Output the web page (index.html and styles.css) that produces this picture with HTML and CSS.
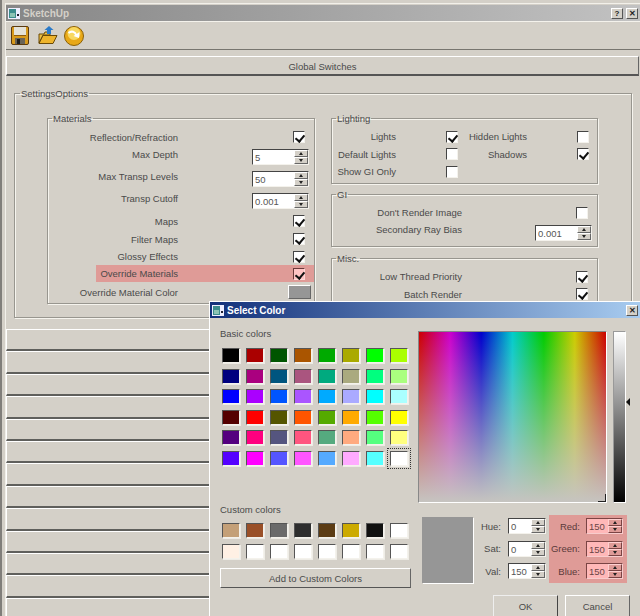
FILE: index.html
```html
<!DOCTYPE html>
<html lang="en">
<head>
    <meta charset="UTF-8">
    <title>SketchUp</title>
    <link rel="stylesheet" href="styles.css">
</head>
<body>
<div class="desktop">

    <div class="window main-window">
        <div class="titlebar titlebar-idle">
            <svg class="app-icon" width="12" height="11" viewBox="0 0 12 11"><rect width="12" height="11" fill="#eef"/><rect x="1" y="1" width="7" height="9" fill="#3c8c8c"/><rect x="2" y="5" width="5" height="4" fill="#8cc4b4"/><rect x="9" y="6" width="2" height="2" fill="#223"/></svg>
            <span class="title-text">SketchUp</span>
            <span class="title-btn help-btn">?</span>
            <span class="title-btn">✕</span>
        </div>

        <div class="toolbar">
            <svg class="tool-icon tool-save" width="18" height="19" viewBox="0 0 18 19">
                <rect x="0.5" y="0.5" width="17" height="18" rx="1.5" fill="#d89a1c" stroke="#5a3a10"/>
                <rect x="3" y="1" width="12" height="8" fill="#e4e2d8"/>
                <rect x="3" y="9" width="12" height="1" fill="#8a5a10"/>
                <rect x="4" y="12" width="10" height="6" fill="#6a6458"/>
                <rect x="6" y="13" width="3" height="5" fill="#1e1e1e"/>
            </svg>
            <svg class="tool-icon tool-open" width="20" height="19" viewBox="0 0 20 19">
                <path d="M1 8h5l1-2h5v3H5L1 17z" fill="#f0c040" stroke="#6a4a08"/>
                <path d="M1 17.500l4-8h14l-4 8z" fill="#eeb42c" stroke="#6a4a08"/>
                <path d="M9 8V4H6.500L11 0l4.500 4H13v4z" fill="#2a7ac8"/>
            </svg>
            <svg class="tool-icon tool-render" width="20" height="20" viewBox="0 0 20 20">
                <circle cx="10" cy="10" r="9.500" fill="#e8a818" stroke="#8a6008"/>
                <circle cx="10" cy="7.500" r="6.500" fill="#f8d860"/>
                <path d="M4.500 7c3-2.500 6.500-1.500 8 2.500" fill="none" stroke="#fff" stroke-width="2"/>
                <path d="M9.500 10l5.500 2 .5-6z" fill="#fff"/>
            </svg>
        </div>

        <div class="main-body">
            <div class="raised-btn wide-btn">Global Switches</div>

            <fieldset class="group settings">
                <legend>SettingsOptions</legend>
                <div class="columns">
                    <fieldset class="group materials">
                        <legend>Materials</legend>
                        <div class="row h18"><span class="lbl">Reflection/Refraction</span><span class="check on"></span></div>
                        <div class="row h22"><span class="lbl lbl-up">Max Depth</span><span class="spin spin-wide"><span class="spin-val">5</span><span class="spin-arrows"><i></i><i></i></span></span></div>
                        <div class="row h22"><span class="lbl lbl-up">Max Transp Levels</span><span class="spin spin-wide"><span class="spin-val">50</span><span class="spin-arrows"><i></i><i></i></span></span></div>
                        <div class="row h22"><span class="lbl lbl-up">Transp Cutoff</span><span class="spin spin-wide"><span class="spin-val">0.001</span><span class="spin-arrows"><i></i><i></i></span></span></div>
                        <div class="row h18"><span class="lbl">Maps</span><span class="check on"></span></div>
                        <div class="row h18"><span class="lbl">Filter Maps</span><span class="check on"></span></div>
                        <div class="row h17"><span class="lbl">Glossy Effects</span><span class="check on"></span></div>
                        <div class="row h17 row-hl"><span class="lbl">Override Materials</span><span class="check on"></span></div>
                        <div class="row h18 row-color"><span class="lbl">Override Material Color</span><span class="color-btn"></span></div>
                    </fieldset>

                    <div class="right-col">
                        <fieldset class="group">
                            <legend>Lighting</legend>
                            <div class="light-grid">
                                <span class="lbl">Lights</span><span class="check on"></span><span class="lbl">Hidden Lights</span><span class="check"></span>
                                <span class="lbl">Default Lights</span><span class="check"></span><span class="lbl">Shadows</span><span class="check on"></span>
                                <span class="lbl">Show GI Only</span><span class="check"></span>
                            </div>
                        </fieldset>
                        <fieldset class="group">
                            <legend>GI</legend>
                            <div class="row-wide h18"><span class="lbl">Don't Render Image</span><span class="check"></span></div>
                            <div class="row-wide h22"><span class="lbl lbl-up">Secondary Ray Bias</span><span class="spin spin-wide spin-gi"><span class="spin-val">0.001</span><span class="spin-arrows"><i></i><i></i></span></span></div>
                        </fieldset>
                        <fieldset class="group misc">
                            <legend>Misc.</legend>
                            <div class="row-wide h18"><span class="lbl">Low Thread Priority</span><span class="check on"></span></div>
                            <div class="row-wide h17"><span class="lbl">Batch Render</span><span class="check on"></span></div>
                        </fieldset>
                    </div>
                </div>
            </fieldset>

            <div class="stack">
                <div class="raised-btn"></div><div class="raised-btn"></div><div class="raised-btn"></div>
                <div class="raised-btn"></div><div class="raised-btn"></div><div class="raised-btn"></div>
                <div class="raised-btn"></div><div class="raised-btn"></div><div class="raised-btn"></div>
                <div class="raised-btn"></div><div class="raised-btn"></div><div class="raised-btn"></div>
                <div class="raised-btn"></div>
            </div>
        </div>
    </div>

    <div class="window color-dialog">
        <div class="titlebar titlebar-active">
            <svg class="app-icon" width="12" height="11" viewBox="0 0 12 11"><rect width="12" height="11" fill="#eef"/><rect x="1" y="1" width="7" height="9" fill="#3c8c8c"/><rect x="2" y="5" width="5" height="4" fill="#8cc4b4"/><rect x="9" y="6" width="2" height="2" fill="#223"/></svg>
            <span class="title-text">Select Color</span>
            <span class="title-btn">✕</span>
        </div>
        <div class="dialog-body">
            <div class="dialog-left">
                <div class="section-label">Basic colors</div>
                <div class="swatches basic">
                    <span class="swatch" style="background:#000000"></span><span class="swatch" style="background:#aa0000"></span><span class="swatch" style="background:#005500"></span><span class="swatch" style="background:#aa5500"></span><span class="swatch" style="background:#00aa00"></span><span class="swatch" style="background:#aaaa00"></span><span class="swatch" style="background:#00ff00"></span><span class="swatch" style="background:#aaff00"></span>
                    <span class="swatch" style="background:#00007f"></span><span class="swatch" style="background:#aa007f"></span><span class="swatch" style="background:#00557f"></span><span class="swatch" style="background:#aa557f"></span><span class="swatch" style="background:#00aa7f"></span><span class="swatch" style="background:#aaaa7f"></span><span class="swatch" style="background:#00ff7f"></span><span class="swatch" style="background:#aaff7f"></span>
                    <span class="swatch" style="background:#0000ff"></span><span class="swatch" style="background:#aa00ff"></span><span class="swatch" style="background:#0055ff"></span><span class="swatch" style="background:#aa55ff"></span><span class="swatch" style="background:#00aaff"></span><span class="swatch" style="background:#aaaaff"></span><span class="swatch" style="background:#00ffff"></span><span class="swatch" style="background:#aaffff"></span>
                    <span class="swatch" style="background:#550000"></span><span class="swatch" style="background:#ff0000"></span><span class="swatch" style="background:#555500"></span><span class="swatch" style="background:#ff5500"></span><span class="swatch" style="background:#55aa00"></span><span class="swatch" style="background:#ffaa00"></span><span class="swatch" style="background:#55ff00"></span><span class="swatch" style="background:#ffff00"></span>
                    <span class="swatch" style="background:#55007f"></span><span class="swatch" style="background:#ff007f"></span><span class="swatch" style="background:#55557f"></span><span class="swatch" style="background:#ff557f"></span><span class="swatch" style="background:#55aa7f"></span><span class="swatch" style="background:#ffaa7f"></span><span class="swatch" style="background:#55ff7f"></span><span class="swatch" style="background:#ffff7f"></span>
                    <span class="swatch" style="background:#5500ff"></span><span class="swatch" style="background:#ff00ff"></span><span class="swatch" style="background:#5555ff"></span><span class="swatch" style="background:#ff55ff"></span><span class="swatch" style="background:#55aaff"></span><span class="swatch" style="background:#ffaaff"></span><span class="swatch" style="background:#55ffff"></span><span class="swatch swatch-focus" style="background:#ffffff"></span>
                </div>
                <div class="section-label custom-label">Custom colors</div>
                <div class="swatches custom">
                    <span class="swatch" style="background:#c4a078"></span><span class="swatch" style="background:#9a5028"></span><span class="swatch" style="background:#6a6a6a"></span><span class="swatch" style="background:#2e2e2e"></span><span class="swatch" style="background:#5c3c14"></span><span class="swatch" style="background:#ccaa00"></span><span class="swatch" style="background:#101010"></span><span class="swatch" style="background:#ffffff"></span>
                    <span class="swatch" style="background:#fff0e4"></span><span class="swatch" style="background:#ffffff"></span><span class="swatch" style="background:#ffffff"></span><span class="swatch" style="background:#ffffff"></span><span class="swatch" style="background:#ffffff"></span><span class="swatch" style="background:#ffffff"></span><span class="swatch" style="background:#ffffff"></span><span class="swatch" style="background:#ffffff"></span>
                </div>
                <div class="raised-btn add-btn">Add to Custom Colors</div>
            </div>

            <div class="dialog-right">
                <div class="picker-row">
                    <div class="picker"><span class="crosshair"></span></div>
                    <div class="value-bar"><span class="value-arrow"></span></div>
                </div>
                <div class="values-row">
                    <div class="preview"></div>
                    <div class="value-grid hsv">
                        <span class="lbl">Hue:</span><span class="spin"><span class="spin-val">0</span><span class="spin-arrows"><i></i><i></i></span></span>
                        <span class="lbl">Sat:</span><span class="spin"><span class="spin-val">0</span><span class="spin-arrows"><i></i><i></i></span></span>
                        <span class="lbl">Val:</span><span class="spin"><span class="spin-val">150</span><span class="spin-arrows"><i></i><i></i></span></span>
                    </div>
                    <div class="value-grid rgb">
                        <span class="lbl">Red:</span><span class="spin"><span class="spin-val">150</span><span class="spin-arrows"><i></i><i></i></span></span>
                        <span class="lbl">Green:</span><span class="spin"><span class="spin-val">150</span><span class="spin-arrows"><i></i><i></i></span></span>
                        <span class="lbl">Blue:</span><span class="spin"><span class="spin-val">150</span><span class="spin-arrows"><i></i><i></i></span></span>
                    </div>
                </div>
                <div class="dialog-buttons">
                    <div class="raised-btn ok-btn">OK</div>
                    <div class="raised-btn">Cancel</div>
                </div>
            </div>
        </div>
    </div>

</div>
</body>
</html>
```
FILE: styles.css
```css
* {
    box-sizing: border-box;
}
body {
    margin: 0;
    font-family: "Liberation Sans", Arial, sans-serif;
    font-size: 9.500px;
    color: #4a4a4a;
}
.desktop {
    position: relative;
    width: 640px;
    height: 616px;
    overflow: hidden;
    background: linear-gradient(to right, #807e7a 2px, #d4d0c8 2px);
}

/* windows */
.window {
    position: absolute;
    background: #d4d0c8;
    border-top: 1px solid #f2f0ea;
    border-left: 1px solid #f2f0ea;
}
.main-window {
    left: 5px;
    top: 3px;
    width: 635px;
    height: 613px;
    padding-top: 1px;
}
.color-dialog {
    left: 209px;
    top: 301px;
    width: 431px;
    height: 315px;
    border-color: #fff;
}
.titlebar {
    display: flex;
    align-items: center;
    height: 16px;
    padding-left: 2px;
}
.titlebar-idle {
    background: linear-gradient(to right, #868686, #c2c2c2);
    color: #d4d0c8;
}
.titlebar-active {
    background: linear-gradient(to right, #12307a, #a8ccf0);
    color: #fff;
}
.app-icon {
    margin-right: 3px;
}
.title-text {
    flex: 1;
    font-weight: bold;
    font-size: 10px;
}
.title-btn {
    display: flex;
    align-items: center;
    justify-content: center;
    width: 12px;
    height: 11px;
    margin-right: 2px;
    background: #d4d0c8;
    border: 1px solid;
    border-color: #fff #555 #555 #fff;
    color: #222;
    font-size: 8px;
    font-weight: bold;
}
.help-btn {
    margin-right: 3px;
}

/* toolbar */
.toolbar {
    display: flex;
    align-items: center;
    height: 29px;
    padding-left: 5px;
    border-top: 1px solid #f4f2ec;
    border-bottom: 1px solid #77756f;
}
.tool-save {
    margin-right: 9px;
}
.tool-open {
    margin-right: 6px;
}

/* main body */
.main-body {
    padding: 6px 1px 0 0;
}
.raised-btn {
    display: flex;
    align-items: center;
    justify-content: center;
    height: 20px;
    background: #d4d0c8;
    border: 1px solid;
    border-color: #fff #666 #555 #fff;
}
.wide-btn {
    padding-top: 1px;
    border-bottom-width: 2px;
}
.group {
    margin: 0;
    padding: 3px 0 2px;
    min-width: 0;
    border: 1px solid #98968f;
    box-shadow: 1px 1px 0 #f6f4ee, inset 1px 1px 0 #f6f4ee;
}
.group legend {
    margin-left: 4px;
    padding: 0 1px;
    line-height: 13px;
    height: 13px;
}
.settings {
    margin: 11px 7px 0 8px;
    padding: 12px 33px 0 32px;
    height: 231px;
}
.settings > legend {
    margin-left: -27px;
}
.columns {
    display: flex;
    gap: 16px;
}
.materials {
    width: 268px;
    height: 192px;
}
.right-col {
    flex: 1;
    display: flex;
    flex-direction: column;
    gap: 4px;
}
.misc {
    flex: 1;
    margin-top: 1px;
}

/* rows */
.row, .row-wide {
    display: flex;
    align-items: center;
}
.h17 { height: 17px; }
.h18 { height: 18px; }
.h22 { height: 22px; }
.lbl {
    flex: none;
    text-align: right;
    white-space: nowrap;
}
.lbl-up {
    padding-bottom: 6px;
}
.row .lbl {
    width: 130px;
}
.row .check, .row .spin, .row .color-btn {
    margin-left: auto;
}
.row .check {
    margin-right: 9px;
}
.row .spin {
    margin-right: 5px;
}
.row-hl {
    margin-left: 48px;
    background: #df9b97;
}
.row-hl .lbl {
    width: 82px;
}
.row-hl .check {
    background-color: #ffc4c4;
    border-color: #6a3a3a #ffd8d8 #ffd8d8 #6a3a3a;
}
.row-color {
    margin-top: 1px;
}
.color-btn {
    width: 23px;
    height: 14px;
    margin-right: 3px;
    background: #969696;
    border: 1px solid;
    border-color: #fff #666 #666 #fff;
}
.row-wide .lbl {
    width: 130px;
}
.row-wide .check {
    margin-left: auto;
    margin-right: 9px;
}
.row-wide .spin-gi {
    margin-left: auto;
    margin-right: 5px;
}
.light-grid {
    display: grid;
    grid-template-columns: 64px 62px 69px 62px;
    grid-auto-rows: 17.500px;
    align-items: center;
}
.light-grid .check {
    justify-self: end;
}

/* checkbox */
.check {
    position: relative;
    flex: none;
    display: block;
    width: 12px;
    height: 12px;
    background: #fff;
    border: 1px solid;
    border-color: #444 #f4f2ec #f4f2ec #444;
}
.check.on::after {
    content: "";
    position: absolute;
    left: 3px;
    top: 1px;
    width: 4px;
    height: 7px;
    border: solid #111;
    border-width: 0 2px 2px 0;
    transform: rotate(40deg);
}

/* spin box */
.spin {
    flex: none;
    display: flex;
    width: 38px;
    height: 16px;
    background: #fff;
    border: 1px solid;
    border-color: #444 #f4f2ec #f4f2ec #444;
    color: #555;
}
.spin-wide {
    width: 57px;
}
.spin-val {
    flex: 1;
    padding-left: 2px;
    line-height: 15px;
    text-align: left;
}
.spin-arrows {
    display: flex;
    flex-direction: column;
    width: 14px;
    background: #d4d0c8;
}
.spin-arrows i {
    flex: 1;
    position: relative;
    border: 1px solid;
    border-color: #fff #666 #666 #fff;
}
.spin-arrows i::after {
    content: "";
    position: absolute;
    left: 4px;
    top: 1px;
    border: 2px solid transparent;
    border-top: 0;
    border-bottom: 3px solid #222;
}
.spin-arrows i + i::after {
    border-bottom: 0;
    border-top: 3px solid #222;
}

/* color dialog */
.dialog-body {
    display: flex;
    padding: 9px 0 0 10px;
}
.dialog-left {
    width: 198px;
}
.section-label {
    height: 13px;
    line-height: 13px;
}
.swatches {
    display: grid;
    grid-template-columns: repeat(8, 18px);
    column-gap: 6px;
    margin-left: 2px;
}
.basic {
    row-gap: 5.600px;
    margin-top: 8px;
}
.custom {
    row-gap: 6px;
    margin-top: 7px;
}
.custom-label {
    margin-top: 37px;
}
.swatch {
    position: relative;
    display: block;
    height: 15px;
    border: 1px solid;
    border-color: #555 #f4f2ec #f4f2ec #555;
    box-shadow: 1px 1px 0 #eeece6;
}
.swatch-focus {
    outline: 1px dotted #333;
    outline-offset: 2px;
}
.add-btn {
    width: 191px;
    margin-top: 9px;
    padding-top: 1px;
}
.dialog-right {
    width: 212px;
    padding-top: 4px;
}
.picker-row {
    display: flex;
    gap: 6px;
    height: 172px;
}
.picker {
    position: relative;
    width: 189px;
    border: 1px solid;
    border-color: #888 #fff #fff #888;
    background:
        linear-gradient(to bottom, rgba(198, 196, 192, 0), #c6c4c0),
        linear-gradient(to right, #cc0000, #cc00cc 16.7%, #0000cc 33.3%, #00cccc 50%, #00cc00 66.7%, #cccc00 83.3%, #cc0000);
}
.crosshair {
    position: absolute;
    right: 0;
    bottom: 0;
    width: 8px;
    height: 8px;
    border: solid #222;
    border-width: 0 1px 1px 0;
}
.value-bar {
    position: relative;
    width: 13px;
    border: 1px solid;
    border-color: #999 #fff #fff #999;
    background: linear-gradient(to bottom, #fff, #000);
}
.value-arrow {
    position: absolute;
    left: 12px;
    top: 66px;
    border: 4px solid transparent;
    border-left: 0;
    border-right: 4px solid #111;
}
.values-row {
    display: flex;
    align-items: flex-start;
    height: 68px;
    margin-top: 12px;
    padding-left: 4px;
}
.preview {
    width: 51px;
    height: 66px;
    margin-top: 2px;
    background: #969696;
    box-shadow: 1px 1px 0 #fff;
}
.value-grid {
    display: grid;
    grid-auto-rows: 22.600px;
    align-items: center;
    column-gap: 7px;
    height: 68px;
}
.hsv {
    grid-template-columns: 28px 38px;
}
.rgb {
    grid-template-columns: 31px 37px;
    margin-left: 3px;
    padding-right: 4px;
    width: 78px;
    column-gap: 6px;
    background: #df9b97;
    color: #5a3a3a;
}
.rgb .spin {
    width: 37px;
    background: #ffb8b8;
    border-color: #7a4444 #f8cccc #f8cccc #7a4444;
    color: #6a4444;
}
.rgb .spin-arrows {
    background: #df9b97;
}
.rgb .spin-arrows i {
    border-color: #ffd0d0 #7a4444 #7a4444 #ffd0d0;
}
.dialog-buttons {
    display: flex;
    gap: 7px;
    margin: 12px 0 0 75px;
}
.dialog-buttons .raised-btn {
    width: 65px;
    height: 22px;
}
.ok-btn {
    border-color: #444;
    border-top-color: #eee;
    border-left-color: #eee;
}

/* stacked toolbox tabs */
.stack {
    display: flex;
    flex-direction: column;
    margin-top: 11px;
}
.stack .raised-btn {
    height: 22.400px;
    flex: none;
    border-right: 0;
    border-bottom-width: 2px;
    border-bottom-color: #5f5f5c;
}
```
